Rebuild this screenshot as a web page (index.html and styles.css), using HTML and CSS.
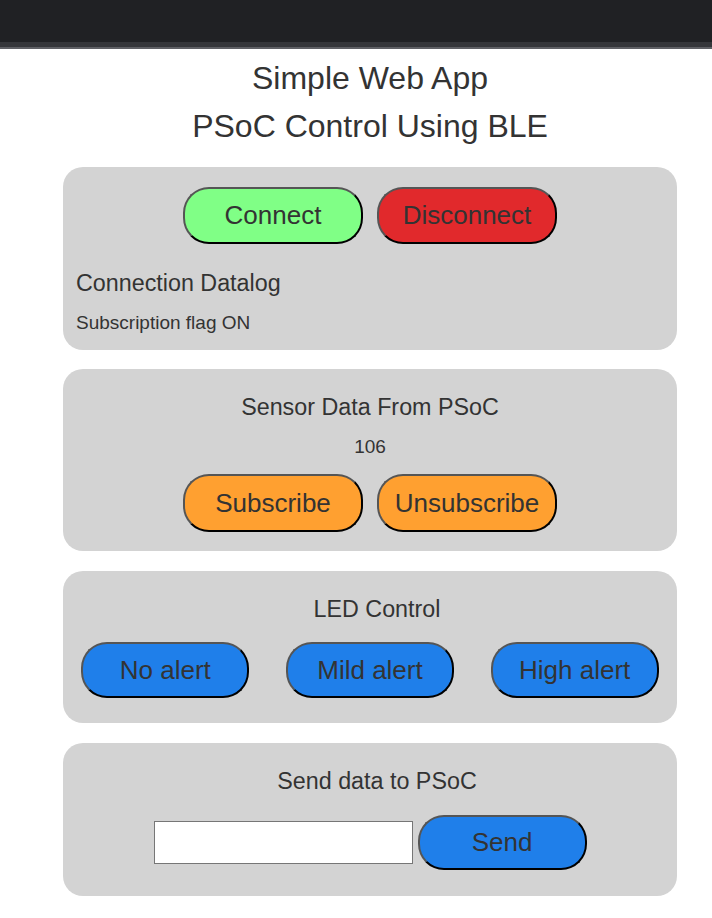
FILE: index.html
```html
<!DOCTYPE html>
<html>
<head>
<meta charset="utf-8">
<title>Simple Web App</title>
<link rel="stylesheet" href="styles.css">
</head>
<body>
<div class="topbar"><div class="topbar-main"></div><div class="topbar-edge"></div><div class="topbar-line"></div></div>
<main class="page">
  <h1 class="title">Simple Web App<br>PSoC Control Using BLE</h1>

  <section class="card card-connect">
    <div class="row row-center">
      <button class="btn btn-big btn-green">Connect</button>
      <button class="btn btn-big btn-red">Disconnect</button>
    </div>
    <p class="label label-left datalog">Connection Datalog</p>
    <p class="small small-left">Subscription flag ON</p>
  </section>

  <section class="card card-sensor">
    <p class="label">Sensor Data From PSoC</p>
    <p class="small value">106</p>
    <div class="row row-center">
      <button class="btn btn-big btn-orange btn-sub">Subscribe</button>
      <button class="btn btn-big btn-orange btn-sub">Unsubscribe</button>
    </div>
  </section>

  <section class="card card-led">
    <p class="label label-shift">LED Control</p>
    <div class="row row-around">
      <button class="btn btn-led btn-blue">No alert</button>
      <button class="btn btn-led btn-blue">Mild alert</button>
      <button class="btn btn-led btn-blue">High alert</button>
    </div>
  </section>

  <section class="card card-send">
    <p class="label label-shift">Send data to PSoC</p>
    <div class="row row-center row-send">
      <input class="text-input" type="text">
      <button class="btn btn-send btn-blue">Send</button>
    </div>
  </section>
</main>
</body>
</html>
```

FILE: styles.css
```css
html, body {
  margin: 0;
  padding: 0;
  background: #ffffff;
}

body {
  font-family: "Liberation Sans", Arial, sans-serif;
  color: #333333;
}

.topbar {
  display: flex;
  flex-direction: column;
}
.topbar-main { height: 42px; background: #202124; }
.topbar-edge { height: 5px; background: #35363a; }
.topbar-line { height: 2px; background: #5f6065; }

.page {
  width: 614px;
  margin-left: 63px;
  padding-bottom: 20px;
}

.title {
  margin: 5px 0 17px;
  font-size: 32px;
  font-weight: normal;
  line-height: 48px;
  text-align: center;
  color: #333333;
}

.card {
  background: #d3d3d3;
  border-radius: 20px;
  margin-bottom: 20px;
  display: flex;
  flex-direction: column;
}

.card-connect { padding: 20px 13px 16px; margin-bottom: 19px; }
.card-sensor { padding: 25px 0 19px; }
.card-led { padding: 25px 0 25px; }
.card-send { padding: 25px 0 26px; }

.label {
  margin: 0;
  font-size: 23.3px;
  line-height: 26px;
  text-align: center;
}
.label-left { text-align: left; }
.label-shift { padding-left: 14px; }
.datalog { margin-top: 26px; }

.small {
  margin: 0;
  font-size: 19px;
  line-height: 22px;
  text-align: center;
}
.small-left { text-align: left; margin-top: 16px; }
.value { margin-top: 16px; }

.row {
  display: flex;
  align-items: center;
}
.row-center { justify-content: center; gap: 14px; }
.row-around { justify-content: space-around; margin-top: 20px; }
.row-send { gap: 5px; margin-top: 21px; }

.card-sensor .row { margin-top: 16px; }

.btn {
  font-family: "Liberation Sans", Arial, sans-serif;
  font-size: 26px;
  color: #333333;
  border-width: 2px;
  border-style: solid;
  border-color: #555555 #000000 #000000 #555555;
  border-radius: 26px;
  padding: 0;
  box-sizing: border-box;
}

.btn-big { width: 180px; height: 57px; }
.btn-sub { height: 58px; }
.btn-led { width: 168px; height: 56px; }
.btn-send { width: 169px; height: 55px; }

.btn-green { background: #80ff86; }
.btn-red { background: #e1292c; }
.btn-orange { background: #ffa030; }
.btn-blue { background: #1f7fea; }

.text-input {
  width: 259px;
  height: 43px;
  box-sizing: border-box;
  border: 1px solid #767676;
  background: #ffffff;
  margin: 0;
  padding: 0 4px;
  font-size: 16px;
}
```
